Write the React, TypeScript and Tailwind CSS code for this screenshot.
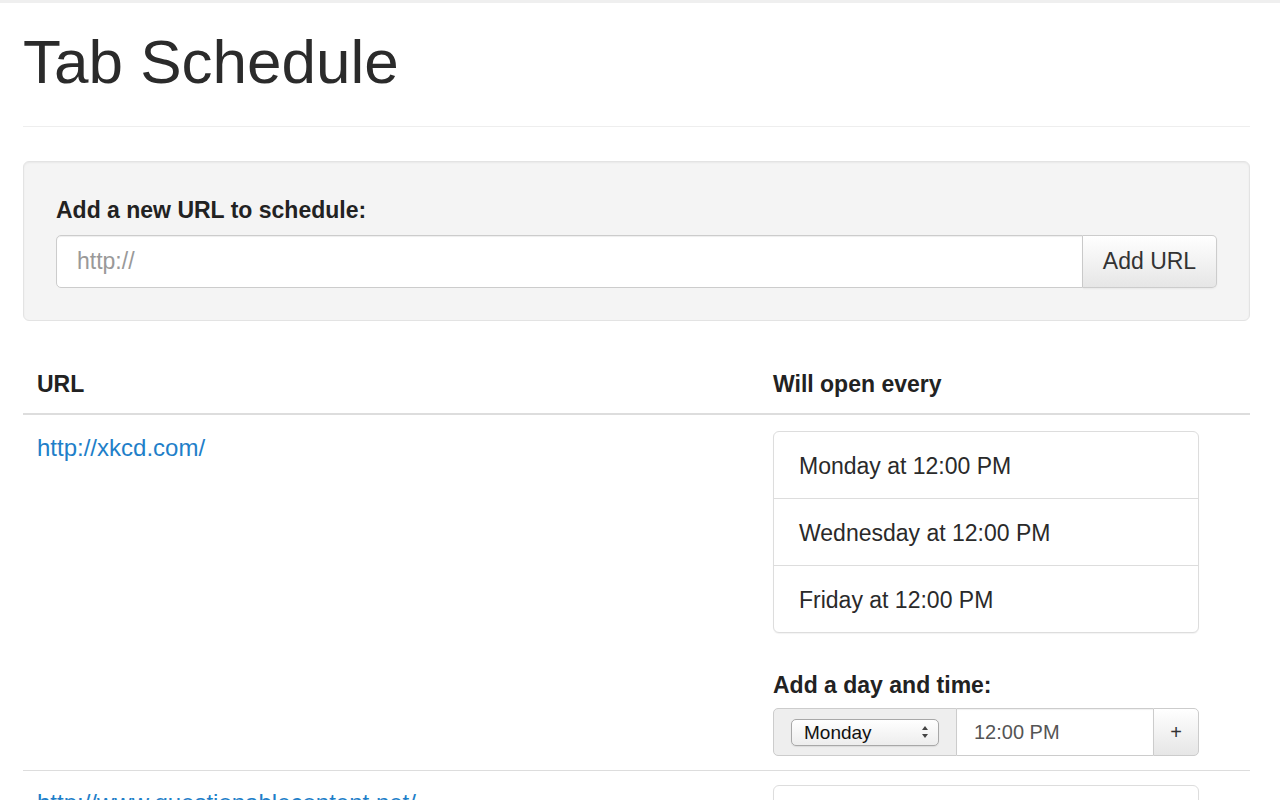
const schedule = [
  {
    url: 'http://xkcd.com/',
    times: ['Monday at 12:00 PM', 'Wednesday at 12:00 PM', 'Friday at 12:00 PM'],
  },
  {
    url: 'http://www.questionablecontent.net/',
    times: ['Monday at 12:00 PM', 'Tuesday at 12:00 PM', 'Wednesday at 12:00 PM'],
  },
];

function SelectArrows() {
  return (
    <svg width="8" height="14" viewBox="0 0 8 14" className="shrink-0">
      <path d="M4 1 L7 5 H1 Z" fill="#444" />
      <path d="M4 13 L7 9 H1 Z" fill="#444" />
    </svg>
  );
}

function AddTime() {
  return (
    <div>
      <div className="mt-[37px] mb-[8px] text-[23px] leading-[30px] font-bold text-[#222]">Add a day and time:</div>
      <div className="flex h-[48px] w-[426px]">
        <div className="flex w-[184px] items-center rounded-l-[5px] border border-[#ccc] bg-[#eee] pl-[17px]">
          <div className="flex h-[27px] w-[148px] items-center justify-between rounded-[5px] border border-[#a8a8a8] bg-gradient-to-b from-white to-[#ededed] pr-[9px] pl-[12px] text-[19px] leading-none text-[#111] shadow-[0_1px_1px_rgba(0,0,0,0.08)]">
            <span>Monday</span>
            <SelectArrows />
          </div>
        </div>
        <div className="flex flex-1 items-center border-y border-[#ccc] bg-white pl-[17px] text-[20px] text-[#555] shadow-[inset_0_1px_1px_rgba(0,0,0,0.06)]">
          12:00 PM
        </div>
        <div className="flex w-[46px] items-center justify-center rounded-r-[5px] border border-[#ccc] bg-gradient-to-b from-white to-[#e6e6e6] text-[20px] leading-none text-[#333]">
          +
        </div>
      </div>
    </div>
  );
}

export default function App() {
  return (
    <div className="min-h-screen bg-white font-['Liberation_Sans',Arial,sans-serif] text-[#333]">
      <div className="h-[3px] bg-[#efefef]" />
      <div className="ml-[23px] w-[1227px]">
        <h1 className="border-b border-[#eee] pt-[28px] pb-[33px] text-[62px] leading-[62px] font-normal text-[#2b2b2b]">
          Tab Schedule
        </h1>

        <div className="mt-[34px] rounded-[6px] border border-[#e3e3e3] bg-[#f4f4f4] px-[32px] pt-[33px] pb-[32px] shadow-[inset_0_1px_2px_rgba(0,0,0,0.05)]">
          <div className="mb-[10px] text-[23px] leading-[30px] font-bold text-[#222]">Add a new URL to schedule:</div>
          <div className="flex h-[53px]">
            <input
              placeholder="http://"
              className="min-w-0 flex-1 rounded-l-[5px] border border-[#ccc] bg-white pl-[20px] text-[23px] text-[#555] shadow-[inset_0_1px_1px_rgba(0,0,0,0.07)] outline-none placeholder:text-[#999]"
            />
            <button className="w-[134px] rounded-r-[5px] border border-l-0 border-[#ccc] bg-gradient-to-b from-white to-[#e6e6e6] text-[23px] text-[#333] shadow-[0_1px_2px_rgba(0,0,0,0.05)]">
              Add URL
            </button>
          </div>
        </div>

        <div className="mt-[33px]">
          <div className="grid grid-cols-[736px_1fr] border-b-2 border-[#ddd] text-[23px] leading-[30px] font-bold text-[#222]">
            <div className="px-[14px] pt-[15px] pb-[14px]">URL</div>
            <div className="px-[14px] pt-[15px] pb-[14px]">Will open every</div>
          </div>
          {schedule.map((row, i) => (
            <div key={row.url} className={`grid grid-cols-[736px_1fr] ${i > 0 ? 'border-t border-[#ddd]' : ''}`}>
              <div className={`px-[14px] ${i === 0 ? 'pt-[18px]' : 'pt-[17px]'} text-[24px] leading-[30px]`}>
                <a className="text-[#1f7fc9]">{row.url}</a>
              </div>
              <div className={`px-[14px] ${i === 0 ? 'pt-[16px]' : 'pt-[14px]'} pb-[14px]`}>
                <div className="w-[426px] rounded-[6px] border border-[#ddd] bg-white shadow-[0_1px_1px_rgba(0,0,0,0.05)]">
                  {row.times.map((t, j) => (
                    <div
                      key={t}
                      className={`h-[47px] box-content pt-[19px] pl-[25px] text-[23px] leading-[30px] text-[#2a2a2a] ${j > 0 ? 'border-t border-[#ddd]' : ''}`}
                    >
                      {t}
                    </div>
                  ))}
                </div>
                <AddTime />
              </div>
            </div>
          ))}
        </div>
      </div>
    </div>
  );
}
